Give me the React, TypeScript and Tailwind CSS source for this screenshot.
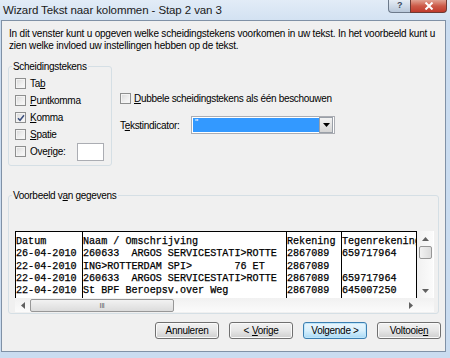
import React from "react";

const ui = "font-['Liberation_Sans',Arial,sans-serif] text-[10px] tracking-[-0.3px] text-black";
const mono =
  "font-['Liberation_Mono','Courier_New',monospace] text-[10.1px] leading-[12.3px] tracking-normal whitespace-pre text-black [-webkit-text-stroke:0.25px_#000]";

function Check({ checked }: { checked?: boolean }) {
  return (
    <span className="flex h-[11px] w-[11px] shrink-0 items-center justify-center border border-[#8e8f8f] bg-gradient-to-br from-[#d8d8d8] via-[#ececec] to-[#fbfbfb] shadow-[inset_0_0_0_1px_#f4f4f4]">
      {checked && (
        <svg width="8" height="8" viewBox="0 0 8 8">
          <path d="M1 4.2 L3 6.3 L7 1.2" fill="none" stroke="#3b4f7e" strokeWidth="1.5" />
        </svg>
      )}
    </span>
  );
}

function Option({ label, u, checked }: { label: string; u: number; checked?: boolean }) {
  return (
    <div className="flex h-[17px] items-center gap-[4px]">
      <Check checked={checked} />
      <span>
        {label.slice(0, u)}
        <span className="underline">{label[u]}</span>
        {label.slice(u + 1)}
      </span>
    </div>
  );
}

function Btn({ children, primary }: { children: React.ReactNode; primary?: boolean }) {
  return (
    <button
      type="button"
      className={
        primary
          ? "flex h-[17px] w-[64px] items-center justify-center gap-[3px] rounded-[3px] border border-[#3c7fb1] bg-gradient-to-b from-[#eaf6fd] via-[#d9f0fc] to-[#a7d9f5] shadow-[inset_0_0_0_1px_#bfe6fa]"
          : "flex h-[17px] w-[64px] items-center justify-center gap-[3px] rounded-[3px] border border-[#707070] bg-gradient-to-b from-[#f2f2f2] via-[#e6e6e6] to-[#cfcfcf] shadow-[inset_0_0_0_1px_#fafafa]"
      }
    >
      {children}
    </button>
  );
}

const rows = [
  ["Datum", "Naam / Omschrijving", "Rekening", "Tegenrekening"],
  ["26-04-2010", "260633  ARGOS SERVICESTATI>ROTTE", "2867089", "659717964"],
  ["22-04-2010", "ING>ROTTERDAM SPI>       76 ET", "2867089", ""],
  ["22-04-2010", "260633  ARGOS SERVICESTATI>ROTTE", "2867089", "659717964"],
  ["22-04-2010", "St BPF Beroepsv.over Weg", "2867089", "645007250"],
];

const colWidths = ["w-[67px]", "w-[204px]", "w-[55px]", "w-[76px] border-r"];

export default function App() {
  return (
    <div className={`${ui} h-[358px] w-[450px] overflow-hidden bg-[#cadcf0]`}>
      {/* title bar */}
      <div className="flex h-[20px] items-start justify-between bg-gradient-to-b from-[#e2ecf7] to-[#d3e2f2]">
        <span className="pl-[3px] pt-[2px] text-[11.5px] tracking-[-0.1px] text-[#1a1a1a]">
          Wizard Tekst naar kolommen - Stap 2 van 3
        </span>
        <div className="mr-[3px] flex">
          <div className="flex h-[13px] w-[22px] items-center justify-center rounded-bl-[4px] border border-r-0 border-t-0 border-[#6d7a8b] bg-gradient-to-b from-[#e6edf5] to-[#b9c8da] text-[9px] font-bold text-[#3a4a5e]">
            ?
          </div>
          <div className="flex h-[13px] w-[37px] items-center justify-center rounded-br-[4px] border border-t-0 border-[#6d3a34] bg-gradient-to-b from-[#e0a192] via-[#cc5a48] to-[#c0392b]">
            <svg width="10" height="8" viewBox="0 0 10 8">
              <path d="M1.5 0.5 L8.5 7.5 M8.5 0.5 L1.5 7.5" stroke="#fff" strokeWidth="2" />
            </svg>
          </div>
        </div>
      </div>

      {/* client area */}
      <div className="ml-[1px] flex h-[332px] w-[445px] flex-col border border-[#8091a6] bg-[#f0f0f0]">
        <p className="pl-[7px] pr-[1px] pt-[7px] leading-[12px] tracking-[-0.2px]">
          In dit venster kunt u opgeven welke scheidingstekens voorkomen in uw tekst. In het voorbeeld kunt u zien welke invloed uw instellingen hebben op de tekst.
        </p>

        <div className="mt-[9px] flex items-start">
          <fieldset className="ml-[6px] h-[105px] w-[104px] rounded-[3px] border border-[#d5dfe5]">
            <legend className="ml-[3px] px-[1px] leading-[11px]">Scheidingstekens</legend>
            <div className="flex flex-col pl-[6px] pt-[3px]">
              <Option label="Tab" u={2} />
              <Option label="Puntkomma" u={0} />
              <Option label="Komma" u={0} checked />
              <Option label="Spatie" u={0} />
              <div className="flex h-[17px] items-center">
                <Check />
                <span className="ml-[4px]">
                  Ove<span className="underline">r</span>ige:
                </span>
                <span className="ml-[12px] h-[18px] w-[27px] border border-[#abadb3] bg-white" />
              </div>
            </div>
          </fieldset>

          <div className="ml-[8px] flex flex-col pt-[31px]">
            <div className="flex h-[12px] items-center gap-[3px]">
              <Check />
              <span>
                <span className="underline">D</span>ubbele scheidingstekens als één beschouwen
              </span>
            </div>
            <div className="mt-[12px] flex h-[18px] items-center">
              <span className="w-[71px]">
                T<span className="underline">e</span>kstindicator:
              </span>
              <div className="flex h-[18px] w-[144px] items-center border border-[#abadb3] bg-white p-[1px]">
                <div className="h-full flex-1 bg-[#3399ff] pl-[2px] text-[9px] leading-[9px] text-white">"</div>
                <div className="flex h-[16px] w-[14px] items-center justify-center border border-[#9aa0a8] bg-gradient-to-b from-[#f3f3f3] to-[#d5d5d5]">
                  <svg width="7" height="4" viewBox="0 0 7 4">
                    <path d="M0 0 H7 L3.5 4 Z" fill="#000" />
                  </svg>
                </div>
              </div>
            </div>
          </div>
        </div>

        <fieldset className="ml-[6px] mt-[24px] h-[124px] w-[431px] rounded-[3px] border border-[#d5dfe5]">
          <legend className="ml-[3px] px-[1px] leading-[11px]">
            Voorbeeld v<span className="underline">a</span>n gegevens
          </legend>
          <div className="ml-[6px] mt-[30px] flex h-[81px] w-[419px] flex-col bg-white">
            <div className="flex h-[67px]">
              <div className="flex border-t border-black">
                {colWidths.map((w, c) => (
                  <div key={c} className={`${w} ${mono} overflow-hidden border-l border-black pt-[4px]`}>
                    {rows.map((r, i) => (
                      <div key={i}>{r[c] || " "}</div>
                    ))}
                  </div>
                ))}
              </div>
              <div className="flex w-[16px] flex-col items-center bg-gradient-to-r from-[#f1f1f1] to-[#fbfbfb]">
                <div className="flex h-[15px] items-center">
                  <svg width="7" height="4" viewBox="0 0 7 4">
                    <path d="M0 4 H7 L3.5 0 Z" fill="#606060" />
                  </svg>
                </div>
                <div className="h-[13px] w-[13px] rounded-[2px] border border-[#979797] bg-gradient-to-r from-[#f2f2f2] to-[#dcdcdc]" />
                <div className="flex-1" />
                <div className="flex h-[14px] items-center">
                  <svg width="7" height="4" viewBox="0 0 7 4">
                    <path d="M0 0 H7 L3.5 4 Z" fill="#606060" />
                  </svg>
                </div>
              </div>
            </div>
            <div className="flex h-[14px] items-center bg-gradient-to-b from-[#f1f1f1] to-[#fbfbfb]">
              <div className="flex w-[15px] justify-center">
                <svg width="4" height="7" viewBox="0 0 4 7">
                  <path d="M4 0 V7 L0 3.5 Z" fill="#606060" />
                </svg>
              </div>
              <div className="flex h-[13px] w-[144px] items-center justify-center rounded-[2px] border border-[#979797] bg-gradient-to-b from-[#f2f2f2] to-[#dcdcdc] text-[7px] leading-none text-[#555]">
                III
              </div>
              <div className="flex-1" />
              <div className="flex w-[15px] justify-center">
                <svg width="4" height="7" viewBox="0 0 4 7">
                  <path d="M0 0 V7 L4 3.5 Z" fill="#606060" />
                </svg>
              </div>
              <div className="w-[16px]" />
            </div>
          </div>
        </fieldset>

        <div className="mt-[8px] flex justify-end gap-[10px] pr-[4px]">
          <Btn>Annuleren</Btn>
          <Btn>
            <span>&lt;</span>
            <span>
              <span className="underline">V</span>orige
            </span>
          </Btn>
          <Btn primary>Volgende &gt;</Btn>
          <Btn>
            <span>
              Voltooie<span className="underline">n</span>
            </span>
          </Btn>
        </div>
      </div>
    </div>
  );
}
